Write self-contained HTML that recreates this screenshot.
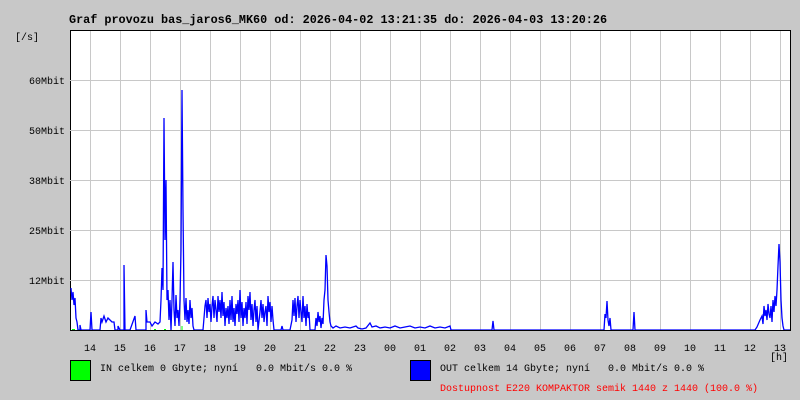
<!DOCTYPE html>
<html><head><meta charset="utf-8"><style>
html,body{margin:0;padding:0;background:#c8c8c8;}
body{width:800px;height:400px;position:relative;overflow:hidden;font-family:"Liberation Mono","DejaVu Sans Mono",monospace;}
</style></head><body>
<svg width="800" height="400" xmlns="http://www.w3.org/2000/svg" style="position:absolute;left:0;top:0">
<rect x="0" y="0" width="800" height="400" fill="#c8c8c8"/>
<text x="69" y="23" font-family="Liberation Mono, monospace" font-weight="bold" font-size="11.8" fill="#000">Graf provozu bas_jaros6_MK60 od: 2026-04-02 13:21:35 do: 2026-04-03 13:20:26</text>
<rect x="70.5" y="30.5" width="720" height="300" fill="#fff" stroke="#000" stroke-width="1"/>
<g stroke="#c8c8c8" stroke-width="1">
<path d="M90.5 31V330M120.5 31V330M150.5 31V330M180.5 31V330M210.5 31V330M240.5 31V330M270.5 31V330M300.5 31V330M330.5 31V330M360.5 31V330M390.5 31V330M420.5 31V330M450.5 31V330M480.5 31V330M510.5 31V330M540.5 31V330M570.5 31V330M600.5 31V330M630.5 31V330M660.5 31V330M690.5 31V330M720.5 31V330M750.5 31V330M780.5 31V330"/>
<path d="M66 80.5H790M66 130.5H790M66 180.5H790M66 230.5H790M66 280.5H790"/>
</g>
<g font-family="Liberation Mono, monospace" font-size="10" fill="#000" text-anchor="end">
<text x="65" y="84">60Mbit</text><text x="65" y="134">50Mbit</text><text x="65" y="184">38Mbit</text><text x="65" y="234">25Mbit</text><text x="65" y="284">12Mbit</text>
</g>
<text x="15" y="40" font-family="Liberation Mono, monospace" font-size="10" fill="#000">[/s]</text>
<g font-family="Liberation Mono, monospace" font-size="10" fill="#000" text-anchor="middle">
<text x="90" y="351">14</text><text x="120" y="351">15</text><text x="150" y="351">16</text><text x="180" y="351">17</text><text x="210" y="351">18</text><text x="240" y="351">19</text><text x="270" y="351">20</text><text x="300" y="351">21</text><text x="330" y="351">22</text><text x="360" y="351">23</text><text x="390" y="351">00</text><text x="420" y="351">01</text><text x="450" y="351">02</text><text x="480" y="351">03</text><text x="510" y="351">04</text><text x="540" y="351">05</text><text x="570" y="351">06</text><text x="600" y="351">07</text><text x="630" y="351">08</text><text x="660" y="351">09</text><text x="690" y="351">10</text><text x="720" y="351">11</text><text x="750" y="351">12</text><text x="780" y="351">13</text><text x="779" y="360">[h]</text>
</g>
<polyline fill="none" stroke="#0000ff" stroke-width="1.3" points="71,288 72,300 73,292 74,305 75,298 76,318 77,322 78,330 80,330 80,325 81,330 90,330 91,312 92,330 100,330 101,318 102,322 104,316 106,322 108,318 110,320 112,322 114,322 115,330 118,330 118,326 120,330 124,330 124,265 125,330 130,330 135,316 136,330 140,330 146,330 146,310 147,322 150,322 152,326 155,322 158,324 160,322 161,300 162,268 163,290 164,118 165,240 166,180 167,300 168,290 169,320 170,300 171,330 172,300 173,262 174,310 175,326 176,295 177,318 178,310 179,326 180,300 181,250 182,90 183,210 184,300 185,320 186,298 187,322 188,310 189,324 190,300 191,318 192,308 193,326 194,330 203,330 204,318 205,306 206,300 207,318 208,298 209,312 210,304 211,322 212,306 213,296 214,318 215,300 216,310 217,322 218,296 219,312 220,300 221,318 222,292 223,316 224,302 225,326 226,308 227,318 228,306 229,324 230,300 231,320 232,296 233,322 234,308 235,326 236,304 237,314 238,300 239,322 240,290 241,318 242,302 243,326 244,308 245,318 246,302 247,324 248,296 249,310 250,292 251,320 252,304 253,326 254,310 255,300 256,322 257,306 258,330 260,312 261,300 262,318 263,304 264,322 265,312 266,306 267,326 268,296 269,312 270,302 271,322 272,306 273,320 274,330 281,330 282,326 283,330 290,330 292,320 293,300 294,316 295,298 296,322 297,306 298,296 299,318 300,300 301,312 302,322 303,296 304,318 305,306 306,326 307,304 308,318 309,312 310,330 315,330 316,318 317,326 318,312 319,322 320,316 321,328 322,318 323,324 324,300 325,290 326,255 327,266 328,300 329,312 330,322 331,326 333,328 336,326 340,328 345,327 350,328 356,326 358,328 362,329 366,328 370,323 372,327 376,326 380,328 385,327 390,328 395,326 400,328 405,327 410,326 415,328 420,327 425,328 430,326 435,328 440,327 445,328 450,326 451,330 492,330 493,321 494,330 604,330 605,314 606,318 607,301 608,320 609,326 610,318 611,330 633,330 634,312 635,330 755,330 757,327 760,320 762,316 763,324 764,306 765,316 766,310 767,320 768,304 769,314 770,318 771,306 772,322 773,300 774,312 775,296 776,306 777,290 778,266 779,244 780,262 781,300 782,318 783,326 784,330 790,330"/>
<path d="M72 329.5H75M154 329.5H156M164 329.5H166M182 326V330" stroke="#00ff00" stroke-width="1"/>
<line x1="70" y1="330.5" x2="791" y2="330.5" stroke="#000" stroke-width="1"/>
<rect x="70.5" y="360.5" width="20" height="20" fill="#00ff00" stroke="#000"/>
<rect x="410.5" y="360.5" width="20" height="20" fill="#0000ff" stroke="#000"/>
<g font-family="Liberation Mono, monospace" font-size="10" fill="#000">
<text x="100" y="371" xml:space="preserve">IN celkem 0 Gbyte; nyní   0.0 Mbit/s 0.0 %</text>
<text x="440" y="371" xml:space="preserve">OUT celkem 14 Gbyte; nyní   0.0 Mbit/s 0.0 %</text>
<text x="440" y="391" fill="#ff0000">Dostupnost E220 KOMPAKTOR semik 1440 z 1440 (100.0 %)</text>
</g>
</svg>
</body></html>
